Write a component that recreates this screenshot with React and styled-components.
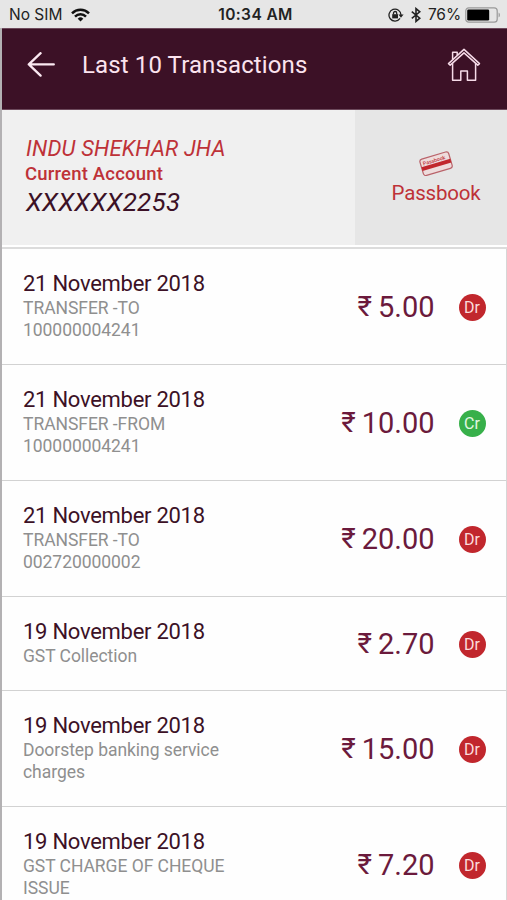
import React from "react";
import styled, { createGlobalStyle } from "styled-components";

const GlobalStyle = createGlobalStyle`
  * {
    box-sizing: border-box;
  }

  body {
    margin: 0;
    background: #fefefe;
    font-family: Roboto, "Liberation Sans", sans-serif;
  }
`;

const Screen = styled.div`
  width: 507px;
  height: 900px;
  overflow: hidden;
  display: flex;
  flex-direction: column;
`;

const StatusBar = styled.div`
  flex: none;
  height: 28px;
  padding: 1px 6px 0 9px;
  display: grid;
  grid-template-columns: 1fr auto 1fr;
  align-items: center;
  background: #e6e6e6;
  color: #222;
  font-family: Inter, "Liberation Sans", sans-serif;
  font-size: 15.5px;
  line-height: 27px;
`;

const StatusGroup = styled.div`
  display: flex;
  align-items: center;
  justify-content: ${({ $end }) => ($end ? "flex-end" : "flex-start")};
`;

const Carrier = styled.span`
  margin-right: 9px;
`;

const Clock = styled.div`
  padding-left: 1px;
  font-weight: 600;
  letter-spacing: 0.4px;
`;

const Percent = styled.span`
  margin: 0 4px 0 7px;
  letter-spacing: -0.1px;
`;

const Page = styled.div`
  flex: 1;
  min-height: 0;
  border-left: 2px solid #b3b1b3;
`;

const Header = styled.header`
  height: 82px;
  padding: 0 26px 9px 25px;
  display: flex;
  align-items: center;
  background: #3c1126;
  border-top: 1px solid #6d4a5c;
  border-bottom: 1px solid #6d4a5c;
`;

const Title = styled.h1`
  flex: 1;
  margin: 0 0 0 26px;
  color: #fbe3ee;
  font-size: 24px;
  font-weight: 400;
  letter-spacing: 0.12px;
`;

const Account = styled.section`
  height: 139px;
  display: flex;
  padding-bottom: 2px;
  background: #fff;
  border-bottom: 2px solid #dcdcdc;
`;

const AccountInfo = styled.div`
  flex: 1;
  padding: 26px 0 0 24px;
  background: #f0f0f0;
  color: #be3238;
`;

const Holder = styled.div`
  font-size: 22px;
  font-style: italic;
  font-weight: 400;
  letter-spacing: 0.18px;
  line-height: 26px;
`;

const AccountType = styled.div`
  margin-left: -1px;
  font-size: 18.5px;
  font-weight: 500;
  letter-spacing: 0.2px;
  line-height: 24px;
`;

const AccountNumber = styled.div`
  color: #3c1126;
  font-size: 26px;
  font-style: italic;
  font-weight: 400;
  letter-spacing: 0.3px;
  line-height: 33px;
`;

const PassbookButton = styled.button`
  width: 152px;
  padding: 40px 0 0 10px;
  border: 0;
  background: #e6e6e6;
  color: #be3238;
  font-family: inherit;
  font-size: 20.5px;
  letter-spacing: -0.2px;
  line-height: 32px;
  display: flex;
  flex-direction: column;
  align-items: center;
`;

const List = styled.ul`
  margin: 0;
  padding: 0;
  list-style: none;
  border-right: 1px solid #d6d6d6;
`;

const Row = styled.li`
  display: flex;
  align-items: center;
  padding: 21px 20px 22px 21px;
  border-bottom: 1px solid #d2d2d2;
`;

const Details = styled.div`
  width: 215px;
  padding-bottom: 1px;
`;

const DateText = styled.div`
  margin-bottom: -1px;
  color: #3c1126;
  font-size: 22px;
  letter-spacing: -0.27px;
  line-height: 28px;
`;

const Description = styled.div`
  color: #8f8f8f;
  font-size: 17.5px;
  letter-spacing: -0.05px;
  line-height: 22px;
`;

const Amount = styled.div`
  flex: 1;
  display: flex;
  justify-content: flex-end;
  align-items: center;
  gap: 6px;
  padding-top: 1px;
  color: #6b1a3c;
  font-size: 29px;
  line-height: 40px;
`;

const Rupee = styled.span`
  font-size: 28px;
`;

const Badge = styled.span`
  width: 27px;
  height: 27px;
  margin: 2px 0.5px 0 24px;
  border-radius: 50%;
  background: ${({ $credit }) => ($credit ? "#37b04a" : "#c1272d")};
  color: ${({ $credit }) => ($credit ? "#e2f7e4" : "#fbdcdc")};
  font-size: 16px;
  line-height: 27px;
  text-align: center;
`;

const transactions = [
  { date: "21 November 2018", text: ["TRANSFER -TO", "100000004241"], amount: "5.00", type: "Dr" },
  { date: "21 November 2018", text: ["TRANSFER -FROM", "100000004241"], amount: "10.00", type: "Cr" },
  { date: "21 November 2018", text: ["TRANSFER -TO", "002720000002"], amount: "20.00", type: "Dr" },
  { date: "19 November 2018", text: ["GST Collection"], amount: "2.70", type: "Dr" },
  { date: "19 November 2018", text: ["Doorstep banking service", "charges"], amount: "15.00", type: "Dr" },
  { date: "19 November 2018", text: ["GST CHARGE OF CHEQUE", "ISSUE"], amount: "7.20", type: "Dr" },
];

const WifiIcon = () => (
  <svg width="19" height="14" viewBox="0 0 19 14" fill="none" stroke="#111" strokeWidth="2.5">
    <path d="M1 5.3a12.2 12.2 0 0 1 17 0" />
    <path d="M4 8.6a7.8 7.8 0 0 1 11 0" />
    <path d="M9.5 13.4 6.7 10.7a4 4 0 0 1 5.6 0z" fill="#111" stroke="none" />
  </svg>
);

const RotationLockIcon = () => (
  <svg width="16" height="14" viewBox="0 0 16 14" fill="none" stroke="#222" strokeWidth="1.3">
    <path d="M12 10.4A6 6 0 1 1 13 7" />
    <path d="M10.4 6.4h5.2L13 9.8z" fill="#222" stroke="none" />
    <rect x="4.2" y="6.2" width="5.8" height="4.2" fill="#222" stroke="none" />
    <path d="M5.5 6.5V5.1a1.6 1.6 0 0 1 3.2 0v1.4" />
  </svg>
);

const BluetoothSvg = styled.svg`
  margin-left: 7px;
`;

const BluetoothIcon = () => (
  <BluetoothSvg width="10" height="16" viewBox="0 0 10 16" fill="none" stroke="#222" strokeWidth="1.6">
    <path d="M0.8 4.6 8.8 11.2 5 14.4V1.6l3.8 3.2-8 6.6" />
  </BluetoothSvg>
);

const BatteryIcon = () => (
  <svg width="36" height="16" viewBox="0 0 36 16" fill="none">
    <rect x="0.8" y="0.8" width="31.4" height="14.4" rx="3" stroke="#999" strokeWidth="1.2" />
    <rect x="2.2" y="2.4" width="22" height="11.2" rx="1.3" fill="#000" />
    <path d="M33.6 5.5a3 3 0 0 1 0 5z" fill="#999" />
  </svg>
);

const BackIcon = () => (
  <svg width="29" height="26" viewBox="0 0 29 26" fill="none" stroke="#fbe9f1" strokeWidth="2.3" strokeLinecap="round" strokeLinejoin="round">
    <path d="M13.6 1.2 1.8 12.4l11.8 11.2M1.8 12.4h25" />
  </svg>
);

const HomeIcon = () => (
  <svg width="34" height="34" viewBox="0 0 34 34" fill="none" stroke="#f6dbe8" strokeWidth="1.5" strokeLinejoin="round">
    <path d="M1.5 15.6 17 1.4l15.5 14.2-1.7 1.5L17 4.9 3.2 17.1z" />
    <path d="M5.6 15.2V32.3h8.2V23h6.6v9.3h8.2V15.2" />
    <path d="M5.6 11.6V4.2h4.6v3.2" />
  </svg>
);

const CardIcon = () => (
  <svg width="34" height="27" viewBox="0 0 34 27" fill="none">
    <g transform="rotate(-16.5 17 13.5)">
      <rect x="2" y="5.2" width="30" height="17" rx="2.6" fill="#eedcdc" stroke="#b9636a" strokeWidth="1.2" />
      <rect x="2" y="13" width="30" height="3.8" fill="#c1272d" />
      <text x="4.6" y="11.8" fill="#be3238" fontSize="5.2" fontWeight="500" letterSpacing="0" fontFamily="Roboto, sans-serif">
        Passbook
      </text>
    </g>
  </svg>
);

const Transaction = ({ item }) => (
  <Row>
    <Details>
      <DateText>{item.date}</DateText>
      {item.text.map((line) => (
        <Description key={line}>{line}</Description>
      ))}
    </Details>
    <Amount>
      <Rupee>₹</Rupee>
      <span>{item.amount}</span>
    </Amount>
    <Badge $credit={item.type === "Cr"}>{item.type}</Badge>
  </Row>
);

const App = () => {
  return (
    <>
      <GlobalStyle />
      <Screen>
        <StatusBar>
          <StatusGroup>
            <Carrier>No SIM</Carrier>
            <WifiIcon />
          </StatusGroup>
          <Clock>10:34 AM</Clock>
          <StatusGroup $end>
            <RotationLockIcon />
            <BluetoothIcon />
            <Percent>76%</Percent>
            <BatteryIcon />
          </StatusGroup>
        </StatusBar>
        <Page>
          <Header>
            <BackIcon />
            <Title>Last 10 Transactions</Title>
            <HomeIcon />
          </Header>
          <Account>
            <AccountInfo>
              <Holder>INDU SHEKHAR JHA</Holder>
              <AccountType>Current Account</AccountType>
              <AccountNumber>XXXXXX2253</AccountNumber>
            </AccountInfo>
            <PassbookButton>
              <CardIcon />
              Passbook
            </PassbookButton>
          </Account>
          <List>
            {transactions.map((item, index) => (
              <Transaction key={index} item={item} />
            ))}
          </List>
        </Page>
      </Screen>
    </>
  );
};

export default App;
